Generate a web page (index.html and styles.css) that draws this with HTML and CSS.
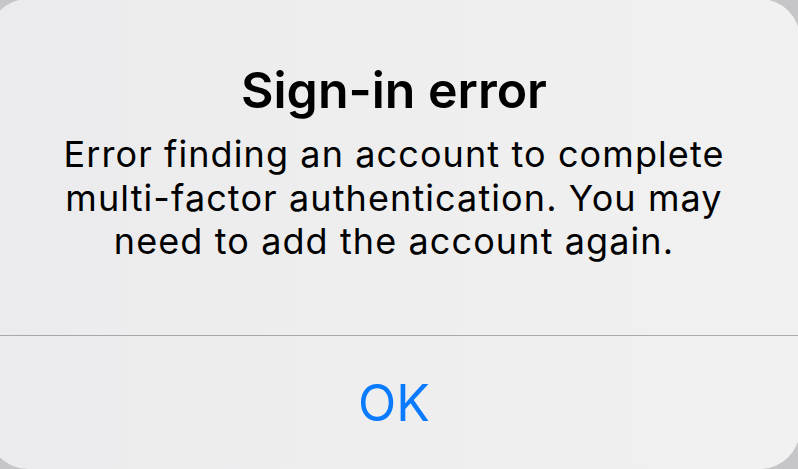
FILE: index.html
```html
<!DOCTYPE html>
<html lang="en">
<head>
  <meta charset="UTF-8">
  <title>Sign-in error</title>
  <meta name="viewport" content="width=device-width, initial-scale=1.0">
  <link rel="stylesheet" href="styles.css">
</head>
<body>
  <div class="alert">
    <div class="alert-body">
      <h2 class="alert-title">Sign-in error</h2>
      <p class="alert-message">Error finding an account to complete<br>multi-factor authentication. You may<br>need to add the account again.</p>
    </div>
    <div class="alert-actions">
      <button class="alert-button">OK</button>
    </div>
  </div>
</body>
</html>
```

FILE: styles.css
```css
* {
  box-sizing: border-box;
}

html, body {
  height: 100%;
}

body {
  margin: 0;
  overflow: hidden;
  background: #c6c6c8;
  font-family: Inter, "Noto Sans", "Liberation Sans", sans-serif;
  color: #000;
}

.alert {
  width: 812px;
  height: 470px;
  margin: -1px 0 0 -12px;
  border-radius: 40px;
  background: linear-gradient(90deg, #ebebed 0%, #eeeeef 50%, #f1f1f1 100%);
  display: flex;
  flex-direction: column;
}

.alert-body {
  height: 337px;
  padding-top: 61px;
  border-bottom: 1px solid #a9a9ab;
  text-align: center;
}

.alert-title {
  margin: 0;
  font-size: 50px;
  line-height: 60px;
  font-weight: 600;
}

.alert-message {
  margin: 13px 0 0;
  font-size: 36px;
  line-height: 43.5px;
  letter-spacing: 1.1px;
  font-weight: 400;
}

.alert-actions {
  flex: 1;
  display: flex;
  align-items: center;
  justify-content: center;
}

.alert-button {
  border: none;
  background: none;
  padding: 0;
  font-family: inherit;
  font-size: 50px;
  line-height: 60px;
  color: #0a7aff;
  cursor: pointer;
}
```
